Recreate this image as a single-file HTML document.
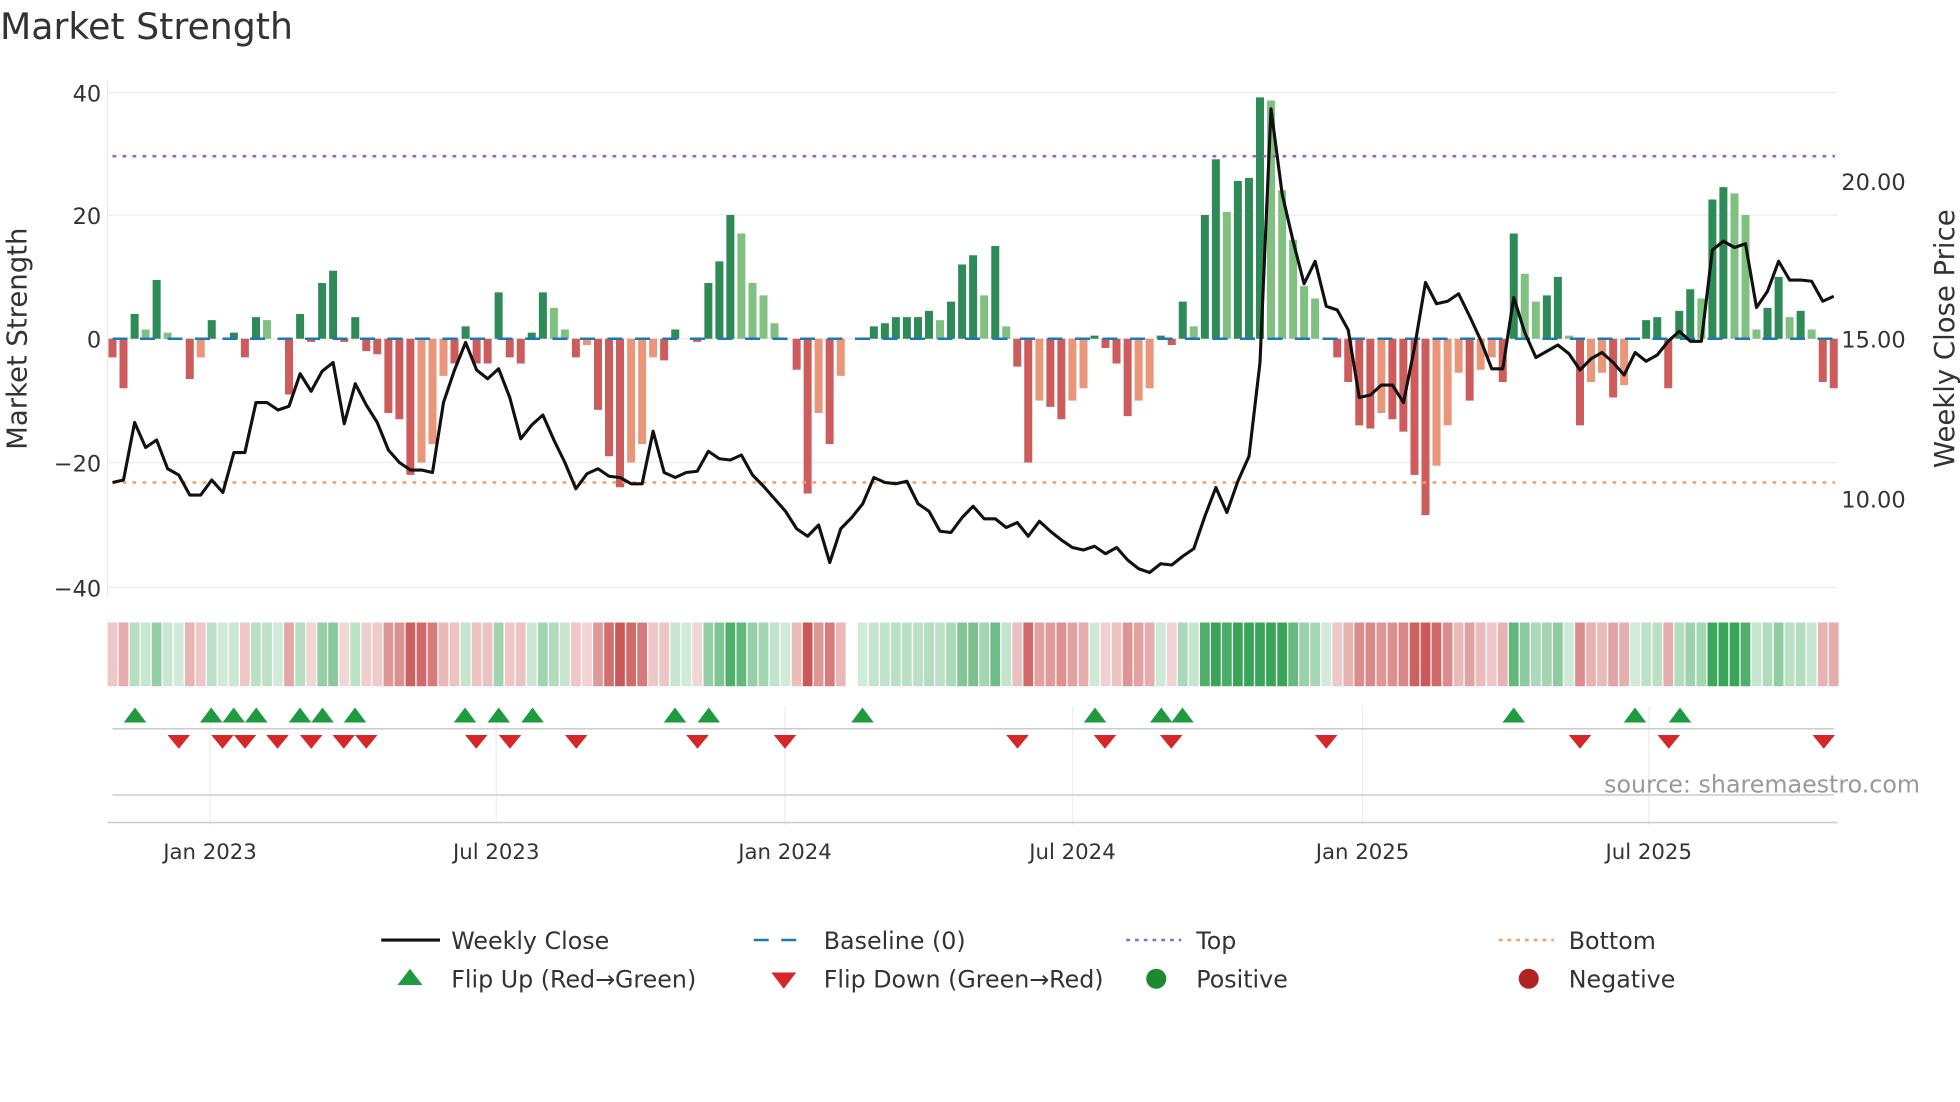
<!DOCTYPE html>
<html><head><meta charset="utf-8"><style>
html,body{margin:0;padding:0;background:#fff;width:1960px;height:1102px;overflow:hidden}
svg{display:block}
text{font-family:"DejaVu Sans","Liberation Sans",sans-serif;fill:#333}
</style></head><body>
<svg id="s" width="1960" height="1102" viewBox="0 0 1568 881.6" xmlns="http://www.w3.org/2000/svg">
<text x="0" y="31" font-size="29">Market Strength</text>
<g stroke="#ececec" stroke-width="1">
<line x1="86" y1="74" x2="1470" y2="74"/><line x1="86" y1="172" x2="1470" y2="172"/><line x1="86" y1="271" x2="1470" y2="271"/><line x1="86" y1="370" x2="1470" y2="370"/><line x1="86" y1="470" x2="1470" y2="470"/>
<line x1="86" y1="64" x2="86" y2="478"/>
</g>
<g font-size="18" text-anchor="end">
<text x="81" y="81">40</text><text x="81" y="179">20</text><text x="81" y="278">0</text><text x="81" y="377">−20</text><text x="81" y="477">−40</text>
</g>
<g font-size="18">
<text x="1473" y="152">20.00</text><text x="1473" y="278">15.00</text><text x="1473" y="406">10.00</text>
</g>
<text transform="translate(21,271) rotate(-90)" font-size="22" text-anchor="middle">Market Strength</text>
<text transform="translate(1563,271) rotate(-90)" font-size="22" text-anchor="middle">Weekly Close Price</text>
<g id="bars"></g>
<line x1="90" y1="271" x2="1468" y2="271" stroke="#1f77b4" stroke-width="2" stroke-dasharray="12,10"/>
<line x1="90" y1="125" x2="1468" y2="125" stroke="#9a5fd6" stroke-width="2" stroke-dasharray="3,5"/>
<line x1="90" y1="386" x2="1468" y2="386" stroke="#f0a060" stroke-width="2" stroke-dasharray="3,5"/>
<polyline id="pl" fill="none" stroke="#111" stroke-width="2.5" stroke-linejoin="round"/>
<g id="heat"></g>
<g stroke="#eee" stroke-width="1">
<line x1="168" y1="565" x2="168" y2="660"/><line x1="397" y1="565" x2="397" y2="660"/><line x1="628" y1="565" x2="628" y2="660"/><line x1="858" y1="565" x2="858" y2="660"/><line x1="1090" y1="565" x2="1090" y2="660"/><line x1="1319" y1="565" x2="1319" y2="660"/>
</g>
<line x1="90" y1="583" x2="1467" y2="583" stroke="#ccc" stroke-width="1.2"/>
<line x1="90" y1="636" x2="1467" y2="636" stroke="#ccc" stroke-width="1.2"/>
<line x1="86" y1="658" x2="1470" y2="658" stroke="#ccc" stroke-width="1.2"/>
<g id="mk"></g>
<text x="1536" y="634" font-size="19" text-anchor="end" style="fill:#999">source: sharemaestro.com</text>
<g font-size="17" text-anchor="middle">
<text x="168" y="687">Jan 2023</text><text x="397" y="687">Jul 2023</text><text x="628" y="687">Jan 2024</text><text x="858" y="687">Jul 2024</text><text x="1090" y="687">Jan 2025</text><text x="1319" y="687">Jul 2025</text>
</g>
<g font-size="19">
<line x1="305" y1="752" x2="352" y2="752" stroke="#111" stroke-width="2.5"/><text x="361" y="759">Weekly Close</text>
<line x1="603" y1="752" x2="647" y2="752" stroke="#1f77b4" stroke-width="2" stroke-dasharray="12,10"/><text x="659" y="759">Baseline (0)</text>
<line x1="901" y1="752" x2="945" y2="752" stroke="#9a5fd6" stroke-width="2" stroke-dasharray="3,4"/><text x="957" y="759">Top</text>
<line x1="1199" y1="752" x2="1243" y2="752" stroke="#f0a060" stroke-width="2" stroke-dasharray="3,4"/><text x="1255" y="759">Bottom</text>
<polygon points="318,788 338,788 328,775" fill="#1f9a3f"/><text x="361" y="790">Flip Up (Red→Green)</text>
<polygon points="617,778 637,778 627,791" fill="#d62728"/><text x="659" y="790">Flip Down (Green→Red)</text>
<circle cx="925" cy="783" r="8" fill="#1e8a2e"/><text x="957" y="790">Positive</text>
<circle cx="1223" cy="783" r="8" fill="#b22222"/><text x="1255" y="790">Negative</text>
</g>
</svg>
<script>
var D=[[-3,386,'r'],[-8,384,'r'],[4,338,'g'],[1.5,358,'l'],[9.5,352,'g'],[1,375,'l'],[0,380,'g'],[-6.5,396,'r'],[-3,396,'o'],[3,384,'g'],[0,394,'g'],[1,362,'g'],[-3,362,'r'],[3.5,322,'g'],[3,322,'l'],[0,328,'g'],[-9,325,'r'],[4,299,'g'],[-0.5,313,'r'],[9,297,'g'],[11,290,'g'],[-0.5,339,'r'],[3.5,307,'g'],[-2,324,'r'],[-2.5,338,'r'],[-12,360,'r'],[-13,370,'r'],[-22,376,'r'],[-20,376,'o'],[-17,378,'o'],[-6,322,'o'],[-4,296,'r'],[2,274,'g'],[-4,296,'r'],[-4,303,'r'],[7.5,295,'g'],[-3,318,'r'],[-4,351,'r'],[1,340,'g'],[7.5,332,'g'],[5,352,'l'],[1.5,370,'l'],[-3,391,'r'],[-1,379,'o'],[-11.5,375,'r'],[-19,381,'r'],[-24,382,'r'],[-20,387,'o'],[-17,387,'o'],[-3,345,'o'],[-3.5,378,'r'],[1.5,382,'g'],[0,378,'g'],[-0.5,377,'r'],[9,361,'g'],[12.5,367,'g'],[20,368,'g'],[17,364,'l'],[9,380,'l'],[7,389,'l'],[2.5,399,'l'],[0,409,'g'],[-5,423,'r'],[-25,429,'r'],[-12,420,'o'],[-17,450,'r'],[-6,423,'o'],[0,414,'g'],[0,403,'g'],[2,382,'g'],[2.5,386,'g'],[3.5,387,'g'],[3.5,385,'g'],[3.5,403,'g'],[4.5,409,'g'],[3,425,'l'],[6,426,'g'],[12,414,'g'],[13.5,405,'g'],[7,415,'l'],[15,415,'g'],[2,422,'l'],[-4.5,418,'r'],[-20,429,'r'],[-10,417,'o'],[-11,425,'r'],[-13,432,'r'],[-10,438,'o'],[-8,440,'o'],[0.5,437,'g'],[-1.5,443,'r'],[-4,438,'r'],[-12.5,448,'r'],[-10,455,'o'],[-8,458,'o'],[0.5,451,'g'],[-1,452,'r'],[6,445,'g'],[2,439,'l'],[20,413,'g'],[29,390,'g'],[20.5,410,'l'],[25.5,385,'g'],[26,365,'g'],[39,290,'g'],[38.5,87,'l'],[24,155,'l'],[16,193,'l'],[8.5,227,'l'],[6.5,209,'l'],[0,245,'g'],[-3,248,'r'],[-7,264,'r'],[-14,318,'r'],[-14.5,316,'r'],[-12,308,'o'],[-13,308,'r'],[-15,322,'r'],[-22,278,'r'],[-28.5,226,'r'],[-20.5,243,'o'],[-14,241,'o'],[-5.5,235,'o'],[-10,253,'r'],[-5,272,'o'],[-3,295,'o'],[-7,295,'r'],[17,238,'g'],[10.5,266,'l'],[6,286,'l'],[7,281,'g'],[10,276,'g'],[0.5,283,'l'],[-14,296,'r'],[-7,287,'o'],[-5.5,282,'o'],[-9.5,290,'r'],[-7.5,300,'o'],[0,282,'g'],[3,289,'g'],[3.5,284,'g'],[-8,273,'r'],[4.5,265,'g'],[8,273,'g'],[6.5,273,'l'],[22.5,200,'g'],[24.5,193,'g'],[23.5,198,'l'],[20,195,'l'],[1.5,246,'l'],[5,233,'g'],[10,209,'g'],[3.5,224,'l'],[4.5,224,'g'],[1.5,225,'l'],[-7,241,'r'],[-8,237,'r']];
var C={g:'#2e8b57',l:'#80c080',r:'#cd5c5c',o:'#e9967a'};
var n=D.length,step=(1467-90)/(n-1),bars='',pts=[],heat='';
for(var i=0;i<n;i++){var x=90+i*step,v=D[i][0],h=Math.abs(v)*4.95;
 if(h>0.3)bars+='<rect x="'+(x-3.2).toFixed(1)+'" y="'+(v>0?271-h:271).toFixed(1)+'" width="6.4" height="'+h.toFixed(1)+'" fill="'+C[D[i][2]]+'"/>';
 pts.push(x.toFixed(1)+','+D[i][1]);
 if(x>677&&x<686)continue;
 var a=Math.min(0.95,0.22+Math.abs(v)/32),col=v>=0?'rgba(46,160,80,'+a+')':'rgba(200,80,80,'+a+')';
 heat+='<rect x="'+(x-3.9).toFixed(1)+'" y="498" width="7.8" height="51" fill="'+col+'"/>';}
document.getElementById('bars').innerHTML=bars;
document.getElementById('pl').setAttribute('points',pts.join(' '));
document.getElementById('heat').innerHTML=heat;
var up=[108,169,187,205,240,258,284,372,399,426,540,567,690,876,929,946,1211,1308,1344],dn=[143,178,196,222,249,275,293,381,408,461,558,628,814,884,937,1061,1264,1335,1459],m='';
up.forEach(function(x){m+='<polygon points="'+(x-9)+',578 '+(x+9)+',578 '+x+',566" fill="#1f9a3f"/>';});
dn.forEach(function(x){m+='<polygon points="'+(x-9)+',588 '+(x+9)+',588 '+x+',599" fill="#d62728"/>';});
document.getElementById('mk').innerHTML=m;
</script>
</body></html>
